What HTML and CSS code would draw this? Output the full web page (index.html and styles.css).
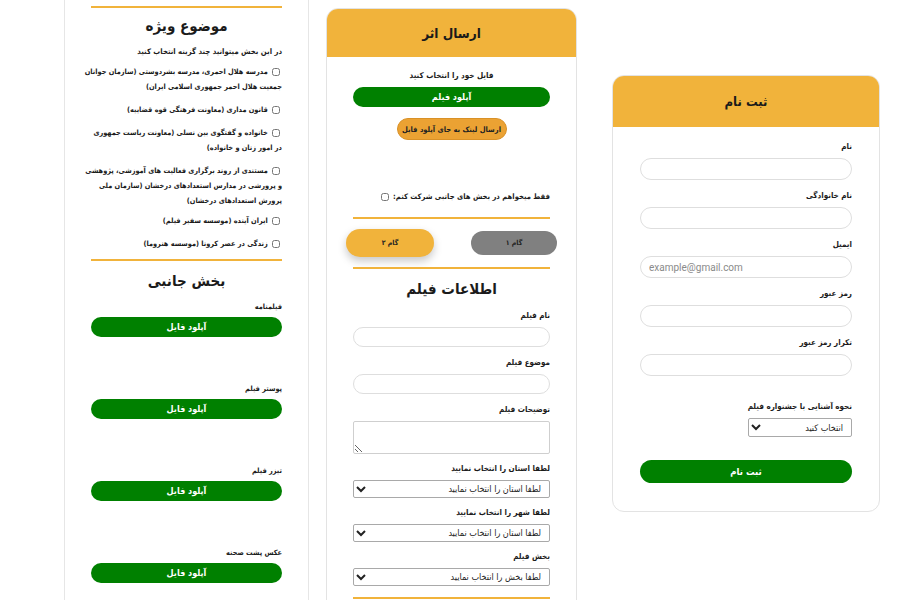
FILE: index.html
```html
<!DOCTYPE html>
<html lang="fa" dir="rtl">
<head>
<meta charset="utf-8">
<title>ارسال اثر</title>
<link rel="stylesheet" href="styles.css">
</head>
<body>
<div class="page">
  <section class="card reg">
    <div class="card-head">ثبت نام</div>
    <form class="card-body">
      <label class="lbl">نام</label>
      <input class="field" type="text">
      <label class="lbl">نام خانوادگی</label>
      <input class="field" type="text">
      <label class="lbl">ایمیل</label>
      <input class="field email" type="email" dir="ltr" placeholder="example@gmail.com">
      <label class="lbl">رمز عبور</label>
      <input class="field" type="password">
      <label class="lbl">تکرار رمز عبور</label>
      <input class="field" type="password">
      <label class="lbl gap-top">نحوه آشنایی با جشنواره فیلم</label>
      <select class="sel small"><option>انتخاب کنید</option></select>
      <button type="button" class="btn-green submit">ثبت نام</button>
    </form>
  </section>

  <section class="card send">
    <div class="card-head">ارسال اثر</div>
    <div class="card-body">
      <p class="center-note">فایل خود را انتخاب کنید</p>
      <button type="button" class="btn-green">آپلود فیلم</button>
      <button type="button" class="btn-orange">ارسال لینک به جای آپلود فایل</button>
      <label class="only-side">فقط میخواهم در بخش های جانبی شرکت کنم: <input type="checkbox" class="chk"></label>
      <hr class="yline first-line">
      <div class="steps">
        <button type="button" class="step step-1">گام ۱</button>
        <button type="button" class="step step-2">گام ۲</button>
      </div>
      <hr class="yline">
      <h2 class="big-title">اطلاعات فیلم</h2>
      <label class="lbl">نام فیلم</label>
      <input class="field thin" type="text">
      <label class="lbl">موضوع فیلم</label>
      <input class="field thin" type="text">
      <label class="lbl">توضیحات فیلم</label>
      <textarea class="area"></textarea>
      <label class="lbl">لطفا استان را انتخاب نمایید</label>
      <select class="sel wide"><option>لطفا استان را انتخاب نمایید</option></select>
      <label class="lbl">لطفا شهر را انتخاب نمایید</label>
      <select class="sel wide"><option>لطفا استان را انتخاب نمایید</option></select>
      <label class="lbl">بخش فیلم</label>
      <select class="sel wide"><option>لطفا بخش را انتخاب نمایید</option></select>
      <hr class="yline">
    </div>
  </section>

  <aside class="side">
    <hr class="yline">
    <h2 class="side-title">موضوع ویژه</h2>
    <p class="side-sub">در این بخش میتوانید چند گزینه انتخاب کنید</p>
    <label class="opt"><input type="checkbox" class="chk"> مدرسه هلال احمری، مدرسه بشردوستی (سازمان جوانان<br>جمعیت هلال احمر جمهوری اسلامی ایران)</label>
    <label class="opt"><input type="checkbox" class="chk"> قانون مداری (معاونت فرهنگی قوه قضاییه)</label>
    <label class="opt"><input type="checkbox" class="chk"> خانواده و گفتگوی بین نسلی (معاونت ریاست جمهوری<br>در امور زنان و خانواده)</label>
    <label class="opt tight"><input type="checkbox" class="chk"> مستندی از روند برگزاری فعالیت های آموزشی، پژوهشی<br>و پرورشی در مدارس استعدادهای درخشان (سازمان ملی<br>پرورش استعدادهای درخشان)</label>
    <label class="opt"><input type="checkbox" class="chk"> ایران آینده (موسسه سفیر فیلم)</label>
    <label class="opt"><input type="checkbox" class="chk"> زندگی در عصر کرونا (موسسه هنروما)</label>
    <hr class="yline">
    <h2 class="side-title second">بخش جانبی</h2>
    <div class="upload">
      <label class="lbl">فیلمنامه</label>
      <button type="button" class="btn-green">آپلود فایل</button>
    </div>
    <div class="upload">
      <label class="lbl">پوستر فیلم</label>
      <button type="button" class="btn-green">آپلود فایل</button>
    </div>
    <div class="upload">
      <label class="lbl">تیزر فیلم</label>
      <button type="button" class="btn-green">آپلود فایل</button>
    </div>
    <div class="upload">
      <label class="lbl">عکس پشت صحنه</label>
      <button type="button" class="btn-green">آپلود فایل</button>
    </div>
  </aside>
</div>
</body>
</html>
```

FILE: styles.css
```css
* { box-sizing: border-box; }

html, body {
  margin: 0;
  height: 600px;
  overflow: hidden;
  background: #ffffff;
}

body {
  font-family: "DejaVu Sans Condensed", "DejaVu Sans", sans-serif;
  color: #1b1b1b;
}

.page {
  display: flex;
  align-items: flex-start;
  padding-right: 20px;
  height: 600px;
}

/* cards */
.card {
  background: #fff;
  border: 1px solid #e3e3e3;
  border-radius: 12px;
  overflow: hidden;
  flex: none;
}

.card-head {
  background: #f1b33b;
  display: flex;
  align-items: center;
  justify-content: center;
  font-weight: bold;
  font-size: 13.5px;
  color: #1a1a1a;
}

.reg {
  width: 268px;
  margin-top: 75px;
  margin-left: 35px;
}

.reg .card-head { height: 51px; font-size: 13px; }

.card-body {
  display: flex;
  flex-direction: column;
}

.reg .card-body {
  padding: 13px 27px 28px;
}

.lbl {
  display: block;
  font-size: 8px;
  font-weight: bold;
  line-height: 14px;
  margin-bottom: 4px;
  text-align: right;
  white-space: nowrap;
}

.field {
  display: block;
  width: 100%;
  height: 22px;
  border: 1px solid #dedede;
  border-radius: 11px;
  padding: 0 8px;
  margin: 0 0 9px;
  font-family: inherit;
  font-size: 10px;
  background: #fff;
}

.field.email::placeholder {
  font-family: Roboto, "Liberation Sans", sans-serif;
  color: #8a8a8a;
  font-size: 10px;
}

.gap-top { margin-top: 15px; }

.sel {
  display: block;
  font-family: inherit;
  font-size: 9px;
  color: #222;
  border: 1px solid #a9a9a9;
  border-radius: 2px;
  background: #fff;
  padding: 0 4px;
}

.sel.small {
  width: 104px;
  height: 19px;
  align-self: flex-start;
}

.sel.wide {
  width: 100%;
  height: 18px;
  margin-bottom: 8px;
}

.btn-green {
  display: block;
  width: 100%;
  height: 20px;
  border: none;
  border-radius: 10px;
  background: #008000;
  color: #fff;
  font-family: inherit;
  font-weight: bold;
  font-size: 9px;
  padding: 0;
}

.submit {
  height: 23px;
  border-radius: 12px;
  margin-top: 23px;
  font-size: 9.5px;
}

/* send card */
.send {
  width: 251px;
  margin-top: 8px;
  margin-left: 17px;
}

.send .card-head { height: 48px; }

.send .card-body {
  padding: 12px 26px 20px;
}

.center-note {
  margin: 0 0 4px;
  font-size: 8px;
  font-weight: bold;
  line-height: 14px;
  text-align: center;
}

.btn-orange {
  align-self: center;
  width: 110px;
  height: 22px;
  margin-top: 11px;
  border: 1px solid #d99127;
  border-radius: 11px;
  background: #eba233;
  color: #222;
  font-family: inherit;
  font-size: 7.5px;
  font-weight: bold;
  padding: 0;
  white-space: nowrap;
}

.only-side {
  display: block;
  margin-top: 50px;
  font-size: 7.6px;
  font-weight: bold;
  line-height: 14px;
  text-align: right;
  white-space: nowrap;
}

.chk {
  width: 8px;
  height: 8px;
  margin: 0 2px;
  vertical-align: middle;
}

.yline {
  width: 100%;
  height: 2px;
  border: none;
  background: #f1b33b;
  margin: 0;
}

.first-line { margin-top: 13px; }

.steps {
  display: flex;
  justify-content: space-between;
  align-items: center;
  margin: 10px -7px 10px;
}

.step {
  border: none;
  font-family: inherit;
  font-size: 7px;
  font-weight: bold;
  color: #222;
  padding: 0;
}

.step-1 {
  width: 86px;
  height: 24px;
  border-radius: 12px;
  background: #808080;
}

.step-2 {
  width: 88px;
  height: 28px;
  border-radius: 14px;
  background: #f1b33b;
  box-shadow: 0 4px 8px rgba(0, 0, 0, 0.22);
}

.big-title {
  margin: 8px 0 8px;
  font-size: 15px;
  line-height: 24px;
  text-align: center;
  font-weight: bold;
}

.field.thin {
  height: 20px;
  border-radius: 10px;
  margin-bottom: 9px;
}

.area {
  display: block;
  width: 100%;
  height: 33px;
  border: 1px solid #cfcfcf;
  border-radius: 2px;
  margin: 0 0 8px;
  resize: vertical;
}

.send .yline:last-child { margin-top: 3px; }

/* side column */
.side {
  width: 245px;
  flex: none;
  height: 620px;
  border-left: 1px solid #e6e6e6;
  border-right: 1px solid #e6e6e6;
  padding: 6px 26px 0;
}

.side-title {
  margin: 6px 0 7px;
  font-size: 15px;
  line-height: 24px;
  text-align: center;
  font-weight: bold;
}

.side-title.second {
  margin: 8px 0 7px;
}

.side-sub {
  margin: 0 0 5px;
  font-size: 7.7px;
  font-weight: bold;
  line-height: 14px;
  text-align: right;
  white-space: nowrap;
}

.opt {
  display: block;
  font-size: 7.3px;
  font-weight: bold;
  line-height: 15px;
  margin-bottom: 8px;
  text-align: right;
  white-space: nowrap;
}

.opt.tight { margin-bottom: 5px; }

.upload {
  margin-bottom: 45px;
}

.upload .lbl { margin-bottom: 3px; font-size: 7.3px; }
```
